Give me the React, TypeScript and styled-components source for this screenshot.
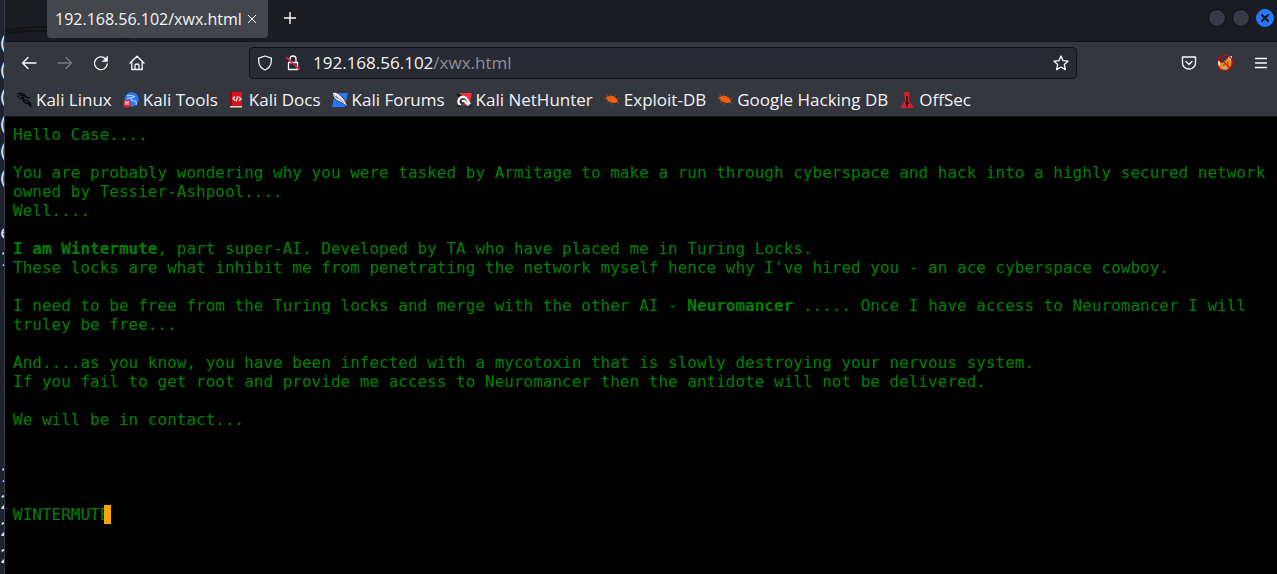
import React from "react";
import styled, { createGlobalStyle } from "styled-components";

const Global = createGlobalStyle`
  *, *::before, *::after { box-sizing: border-box; }
  html, body { margin: 0; background: #000; }
`;

const Desktop = styled.div`
  display: flex;
  min-height: 100vh;
  background: #1d212a;
`;

const Terminal = styled.aside`
  flex: 0 0 5px;
  height: 100vh;
  overflow: hidden;
  border-right: 1px solid #363b4a;
  background: #1f232c;
  color: #dfe4ea;
  font: 20px/27px "DejaVu Sans Mono", monospace;
  padding-top: 30px;
  white-space: pre;
`;

const TermLine = styled.div<{ $bracket: boolean }>`
  height: 27px;
  text-indent: ${(p) => (p.$bracket ? -3 : 0)}px;
`;

const Browser = styled.div`
  flex: 1;
  min-width: 0;
  display: flex;
  flex-direction: column;
  background: #000;
  color: #f4f4f7;
  font: 17px/24px "Open Sans", "Noto Sans", sans-serif;
`;

const TabStrip = styled.header`
  position: relative;
  display: flex;
  align-items: flex-start;
  height: 42px;
  padding-left: 42px;
  background: #1b1c22;
  border-bottom: 1px solid #121318;
`;

const Backdrop = styled.svg`
  position: absolute;
  left: 0;
  bottom: 0;
`;

const Tab = styled.div`
  position: relative;
  display: flex;
  align-items: center;
  width: 221px;
  height: 38px;
  padding: 0 8px;
  border-radius: 0 0 4px 4px;
  background: #42454c;
  font-size: 16px;
  white-space: nowrap;
`;

const TabTitle = styled.span`
  min-width: 191px;
`;

const IconButton = styled.button<{ $w?: number }>`
  display: flex;
  align-items: center;
  justify-content: center;
  flex: none;
  width: ${(p) => p.$w ?? 36}px;
  height: 36px;
  padding: 0;
  border: 0;
  background: none;
  color: #fbfbfe;
  &:disabled { color: #7a7c82; }
`;

const WindowControls = styled.div`
  display: flex;
  gap: 6px;
  margin: 9px 3px 0 auto;
`;

const WindowButton = styled.button<{ $close?: boolean }>`
  display: flex;
  align-items: center;
  justify-content: center;
  width: 18px;
  height: 18px;
  padding: 0;
  border: 1px solid ${(p) => (p.$close ? "#2777ff" : "#0b0c10")};
  border-radius: 50%;
  background: ${(p) => (p.$close ? "#2777ff" : "#353a46")};
`;

const Toolbar = styled.nav`
  display: flex;
  align-items: center;
  height: 41px;
  padding: 0 0 0 6px;
  background: #33363d;
`;

const Address = styled.div`
  display: flex;
  align-items: center;
  flex: 1;
  gap: 2px;
  height: 32px;
  margin: 0 96px 0 94px;
  padding: 0 7px;
  border: 1px solid #111217;
  border-radius: 4px;
  background: #272933;
`;

const UrlText = styled.span`
  flex: 1;
  white-space: nowrap;
  span { color: #8f9098; }
`;

const Bookmarks = styled.nav`
  display: flex;
  align-items: center;
  gap: 11px;
  height: 34px;
  padding: 0 11px;
  border-bottom: 1px solid #16171c;
  background: #33363d;
  white-space: nowrap;
`;

const Bookmark = styled.a`
  display: flex;
  align-items: center;
  gap: 4px;
  color: inherit;
  text-decoration: none;
`;

const Page = styled.main`
  flex: 1;
  padding: 8px;
  color: #008000;
  font: 16px/19px "DejaVu Sans Mono", monospace;
`;

const Para = styled.p`
  margin: 0 0 19px;
`;

const Signature = styled.div`
  display: flex;
  margin-top: 76px;
`;

const Cursor = styled.span`
  width: 7px;
  margin-left: -5px;
  background: #ffa500;
  z-index: 1;
`;

const Stroke = ({ children, size = 16 }: { children: React.ReactNode; size?: number }) => (
  <svg width={size} height={size} viewBox="0 0 16 16" fill="none" stroke="currentColor" strokeWidth="1.3" strokeLinecap="round" strokeLinejoin="round" aria-hidden="true">
    {children}
  </svg>
);

const dragonPath = "M1 2 L5 1 L9 3 L6 3 M1 5 L5 3 L9 4 L12 6 M3 7 L7 5 L8 8 Q11 8 13 10 Q15 11 15 15 Q13 11 10 11 Q6 10 7 5 M9 5 L14 6";

const KaliIcon = () => (
  <svg width="16" height="16" viewBox="0 0 16 16" fill="none" stroke="#08090b" strokeWidth="1.3"><path d={dragonPath} /></svg>
);
const ToolsIcon = () => (
  <svg width="16" height="16" viewBox="0 0 16 16">
    <circle cx="8.5" cy="7.5" r="7.2" fill="#2777ff" />
    <path d="M4 4Q8 2 12 5M4 7Q8 4 11 6M8 6Q8 9 11 9T13 13" stroke="#bcd6ff" strokeWidth="1.1" fill="none" />
    <circle cx="4" cy="11.5" r="3.8" fill="#e8222c" />
    <path d="M2 10h4M3 10v3M5 10v3" stroke="#fff" fill="none" />
  </svg>
);
const DocsIcon = () => (
  <svg width="16" height="16" viewBox="0 0 16 16">
    <path d="M1 0h12v14H1z" fill="#d9121a" /><path d="M1 0h2v14H1z" fill="#8a0a14" />
    <path d="M1 14h12v1.500H1z" fill="#e8d8d8" />
    <path d="M6 4.500L4 6.500l2 2M10 5l2 2-2 2M9 4L7 9.500" stroke="#fff" strokeWidth="1.3" fill="none" />
  </svg>
);
const ForumsIcon = () => (
  <svg width="16" height="16" viewBox="0 0 16 16">
    <path d="M3 1h13l-3 14H0z" fill="#2777ff" />
    <path d="M0 1l3-1 4 2 5 5 4 8-6-4-6-3-3-4z" fill="#e9ebef" stroke="#16181e" strokeWidth=".7" />
    <path d="M1 2l5 5M4 4l8 7" stroke="#6b707c" strokeWidth=".8" />
  </svg>
);
const HunterIcon = () => (
  <svg width="16" height="16" viewBox="0 0 16 16">
    <path d="M3 1h13l-2 9-3-3-5-4z" fill="#f52e3c" />
    <path d="M5 13l9 1-3-5z" fill="#e0182c" />
    <path d="M1 2L5 5" stroke="#111" strokeWidth="2" />
    <path d="M14 12L10 6Q6 3 3 7Q1 12 5 13M6 9Q9 8 10 11L13 13" fill="none" stroke="#fff" strokeWidth="2.2" />
    <path d="M1 14h4M12 14.500h3" stroke="#111" strokeWidth="1.2" />
  </svg>
);
const BugIcon = () => (
  <svg width="16" height="16" viewBox="0 0 16 16">
    <path d="M2 5L5 4L9 4L13 7L14 10L10 11L6 10L3 8z" fill="#f26011" />
    <path d="M2 2l3 3M6 2l1 3M11 3l0 3M0 6l4 1M3 11l2-2M7 13l1-2M13 7l3-1M13 10l2 2" stroke="#a84717" strokeWidth=".9" fill="none" />
  </svg>
);
const OffSecIcon = () => (
  <svg width="16" height="16" viewBox="0 0 16 16">
    <path d="M5 0h6l-1 9 4 5v2H2v-2l4-5z" fill="#d31f29" />
    <path d="M8 4v6M6 11h4M8 10v5" stroke="#32070b" strokeWidth="1.5" fill="none" />
  </svg>
);
const FoxIcon = () => (
  <svg width="18" height="18" viewBox="0 0 18 18">
    <path d="M2 7l4 2 4-3 3-3 3 4-1 5-4 4-6 0-3-5z" fill="#e98a1a" />
    <path d="M2 6l2 2 0 4-2-1zM12 3l4-1-1 5z" fill="#f3eee6" />
    <path d="M5 13l4-1 3 2-4 1z" fill="#b9aa96" />
    <path d="M7 11h1.500M11 9h1.500" stroke="#5a2a10" />
    <circle cx="9" cy="9" r="7.600" fill="none" stroke="#b90f0f" strokeWidth="1.2" />
    <path d="M3.500 3.500l11 11" stroke="#b90f0f" strokeWidth="1.3" />
  </svg>
);

const bookmarks: [string, () => React.JSX.Element][] = [
  ["Kali Linux", KaliIcon],
  ["Kali Tools", ToolsIcon],
  ["Kali Docs", DocsIcon],
  ["Kali Forums", ForumsIcon],
  ["Kali NetHunter", HunterIcon],
  ["Exploit-DB", BugIcon],
  ["Google Hacking DB", BugIcon],
  ["OffSec", OffSecIcon],
];

const terminalLines = ["(", "(", "(", "(", "(", "(", " ", "e", "1", " ", " ", " ", " ", " ", " ", " ", "1", "2", "2", "2"];

export default function App() {
  return (
    <Desktop>
      <Global />
      <Terminal aria-hidden="true">
        {terminalLines.map((t, i) => <TermLine key={i} $bracket={t === "("}>{t}</TermLine>)}
      </Terminal>
      <Browser>
        <TabStrip>
          <Backdrop width="150" height="16" viewBox="0 0 150 16" fill="none" aria-hidden="true">
            <path d="M0 6Q26 0 52 3T125 15M0 9Q30 3 54 8" stroke="#111217" strokeWidth="2" />
          </Backdrop>
          <Tab>
            <TabTitle>192.168.56.102/xwx.html</TabTitle>
            <IconButton $w={12} aria-label="Close tab">
              <svg width="8" height="8" viewBox="0 0 8 8" stroke="currentColor"><path d="M0 0l8 8M8 0L0 8" /></svg>
            </IconButton>
          </Tab>
          <IconButton $w={44} aria-label="New tab">
            <svg width="12" height="12" viewBox="0 0 12 12" stroke="currentColor" strokeWidth="1.400"><path d="M6 0v12M0 6h12" /></svg>
          </IconButton>
          <WindowControls>
            <WindowButton aria-label="Minimize" />
            <WindowButton aria-label="Maximize" />
            <WindowButton $close aria-label="Close">
              <svg width="8" height="8" viewBox="0 0 8 8" stroke="#10131c" strokeWidth="2"><path d="M0 0l8 8M8 0L0 8" /></svg>
            </WindowButton>
          </WindowControls>
        </TabStrip>
        <Toolbar aria-label="Navigation">
          <IconButton aria-label="Back"><Stroke><path d="M15 8H1.500M7 2.500L1.500 8L7 13.500" /></Stroke></IconButton>
          <IconButton disabled aria-label="Forward"><Stroke><path d="M1 8h13.500M9 2.500L14.500 8L9 13.500" /></Stroke></IconButton>
          <IconButton aria-label="Reload">
            <Stroke><path d="M14.300 9A6.400 6.400 0 1 1 12.500 3.800" /><path d="M14.500 1.500v5h-5z" fill="currentColor" strokeWidth=".6" /></Stroke>
          </IconButton>
          <IconButton aria-label="Home">
            <Stroke><path d="M1 8L8 1.300L15 8M2.800 6.800V14.500H13.200V6.800M6 14.300V10.500Q6 9 8 9T10 10.500V14.300" /></Stroke>
          </IconButton>
          <Address>
            <Stroke><path d="M8 1L14.300 3.200V6Q14 12.500 8 15Q2 12.500 1.700 6V3.200z" /></Stroke>
            <IconButton aria-label="Connection is not secure">
              <Stroke><path d="M3.500 7.500h9v7h-9zM5 7V4Q5 1 8 1T11 4V7" /><path d="M1.500 2.500l13 12" stroke="#ff1546" strokeWidth="1.500" /></Stroke>
            </IconButton>
            <UrlText>192.168.56.102<span>/xwx.html</span></UrlText>
            <IconButton $w={16} aria-label="Bookmark this page">
              <Stroke><path d="M8 1l2 4.700 5 .5-3.700 3.400 1.100 5L8 12l-4.400 2.600 1.100-5L1 6.200l5-.5z" /></Stroke>
            </IconButton>
          </Address>
          <IconButton $w={32} aria-label="Save to Pocket">
            <Stroke><path d="M1.500 2h13v6a6.500 6 0 0 1-13 0zM5 6.500l3 3 3-3" /></Stroke>
          </IconButton>
          <IconButton $w={40} aria-label="FoxyProxy"><FoxIcon /></IconButton>
          <IconButton $w={32} aria-label="Menu"><Stroke><path d="M2.500 3.500h11M2.500 8h11M2.500 12.500h11" /></Stroke></IconButton>
        </Toolbar>
        <Bookmarks aria-label="Bookmarks">
          {bookmarks.map(([name, Icon]) => <Bookmark href="#" key={name}><Icon />{name}</Bookmark>)}
        </Bookmarks>
        <Page>
          <Para>Hello Case....</Para>
          <Para>
            You are probably wondering why you were tasked by Armitage to make a run through cyberspace and hack into a highly secured network owned by Tessier-Ashpool....<br />
            Well....
          </Para>
          <Para>
            <b>I am Wintermute</b>, part super-AI. Developed by TA who have placed me in Turing Locks.<br />
            These locks are what inhibit me from penetrating the network myself hence why I've hired you - an ace cyberspace cowboy.
          </Para>
          <Para>
            I need to be free from the Turing locks and merge with the other AI - <b>Neuromancer</b> ..... Once I have access to Neuromancer I will truley be free...
          </Para>
          <Para>
            And....as you know, you have been infected with a mycotoxin that is slowly destroying your nervous system.<br />
            If you fail to get root and provide me access to Neuromancer then the antidote will not be delivered.
          </Para>
          <Para>We will be in contact...</Para>
          <Signature>WINTERMUTE<Cursor /></Signature>
        </Page>
      </Browser>
    </Desktop>
  );
}
